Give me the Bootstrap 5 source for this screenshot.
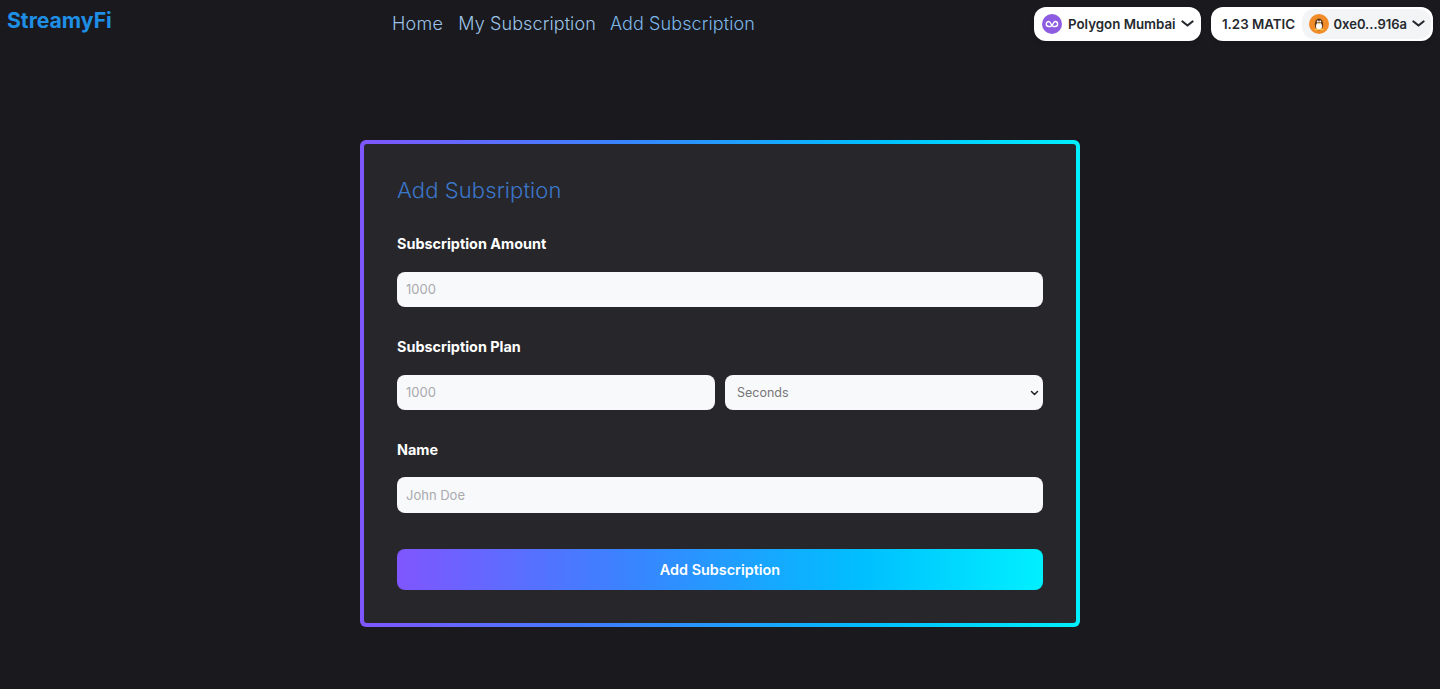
<!doctype html>
<html lang="en">
<head>
<meta charset="utf-8">
<title>StreamyFi</title>
<link rel="stylesheet" href="https://cdn.jsdelivr.net/npm/bootstrap@5.3.0/dist/css/bootstrap.min.css">
<style>
body{background:#19191e;font-family:Inter,"Open Sans",sans-serif;min-height:689px;overflow:hidden}
.top-bar{height:48px;padding:0 7px}
.brand-name{font-size:21.2px;font-weight:700;color:#1f8fe6;line-height:26px;padding-top:7px;width:385px;text-decoration:none}
.top-links{gap:14px;padding-top:12px}
.top-link{font-size:18px;font-weight:300;color:#9cc3e6;line-height:24px;text-decoration:none;letter-spacing:.1px}
.top-link:first-child{margin-right:1px;letter-spacing:.3px}
.top-link.is-blue{color:#7db6e8}
.wallet-area{gap:10px;padding-top:7px;margin-left:auto}
.wallet-btn{height:34px;background:#fff;border-radius:12px;font-size:13.3px;font-weight:600;color:#25292e;box-shadow:0 2px 4px rgba(0,0,0,.1);white-space:nowrap}
.wallet-btn span{padding-top:2px}
.chain-btn{width:167px;padding:0 7px 0 8px}
.chain-btn .chain-name{margin-left:6px}
.acct-btn{width:222px;padding:0 0 0 11px}
.acct-chip{height:30px;background:#f3f4f6;border-radius:12px;padding:0 6px 0 7px;margin-left:auto;margin-right:2px;gap:5px}
.addr-text{font-size:13px}
.chev{flex:none}
.form-frame{width:720px;margin:92px auto 0;height:487px;padding:4px;border-radius:6px;background:linear-gradient(90deg,#7f56ff,#3b82ff 35%,#00bfff 72%,#00f0ff)}
.form-inner{background:#27272b;height:100%;border-radius:3px;padding:32px 33px 33px}
.form-heading{font-size:22px;font-weight:300;color:#3b76c9;line-height:28px;margin:0 0 30px;letter-spacing:.1px}
.field-label{display:block;font-size:14.4px;font-weight:700;color:#fff;line-height:20px;margin-bottom:18px}
.field-block{margin-bottom:30px}
.field-block.is-last{margin-bottom:36px}
.field-block.is-last .field-label{margin-bottom:17px}
.field-ctl{height:35px;background-color:#f8f9fb;border:0;border-radius:8px;font-size:13px;padding:0 9px 2px;color:#777}
.field-ctl::placeholder{color:#a9a9ae;opacity:1}
.field-ctl.tall{height:36px;padding-bottom:0}
.form-select.field-ctl{padding:1px 20px 0 12px;color:#777;font-size:12.5px;background-image:url("data:image/svg+xml,%3csvg xmlns='http://www.w3.org/2000/svg' viewBox='0 0 16 16'%3e%3cpath fill='none' stroke='%23222' stroke-linecap='round' stroke-linejoin='round' stroke-width='3' d='m2 5 6 6 6-6'/%3e%3c/svg%3e");background-size:9px 8px;background-position:right 4px center}
.plan-row{gap:10px;grid-template-columns:1fr 1fr}
.submit-btn{height:41px;width:100%;border:0;border-radius:8px;background:linear-gradient(90deg,#7f56ff,#3b82ff 35%,#00bfff 72%,#00f0ff);color:#fff;font-size:14.4px;font-weight:600;display:block}
.submit-btn:hover{color:#fff}
</style>
</head>
<body>
<header class="top-bar d-flex align-items-start">
  <a class="brand-name" href="#">StreamyFi</a>
  <nav class="top-links d-flex">
    <a class="top-link" href="#">Home</a>
    <a class="top-link" href="#">My Subscription</a>
    <a class="top-link is-blue" href="#">Add Subscription</a>
  </nav>
  <div class="wallet-area d-flex">
    <div class="wallet-btn chain-btn d-flex align-items-center">
      <svg width="20" height="20" viewBox="0 0 20 20" aria-hidden="true"><circle cx="10" cy="10" r="10" fill="#8d5ce0"/><path d="M4.300 10a2.500 2.500 0 0 1 2.500-2.500c2 0 2.400 5 4.400 5h1.900a2.500 2.500 0 0 0 0-5c-2 0-2.400 5-4.400 5H6.800A2.500 2.500 0 0 1 4.300 10z" fill="none" stroke="#fff" stroke-width="1.400"/></svg>
      <span class="chain-name">Polygon Mumbai</span>
      <svg class="chev ms-auto" width="13" height="8" viewBox="0 0 13 8" aria-hidden="true"><path d="M1.500 1.500 6.500 5.500l5-4" fill="none" stroke="#25292e" stroke-width="2.200" stroke-linecap="round" stroke-linejoin="round"/></svg>
    </div>
    <div class="wallet-btn acct-btn d-flex align-items-center">
      <span>1.23 MATIC</span>
      <div class="acct-chip d-flex align-items-center">
        <svg width="20" height="20" viewBox="0 0 20 20" aria-hidden="true"><circle cx="10" cy="10" r="10" fill="#f28c28"/><ellipse cx="10" cy="10.500" rx="4.200" ry="6" fill="#5b3a1c"/><ellipse cx="10" cy="12.300" rx="3" ry="3.600" fill="#fff"/><circle cx="8.800" cy="7.600" r="1" fill="#fff"/><circle cx="11.200" cy="7.600" r="1" fill="#fff"/><path d="M8.600 9h2.800L10 10.400z" fill="#f6c04a"/><path d="M6 15.500h3M11 15.500h3" stroke="#f6c04a" stroke-width="1.500" stroke-linecap="round"/></svg>
        <span class="addr-text">0xe0...916a</span>
        <svg class="chev" width="13" height="8" viewBox="0 0 13 8" aria-hidden="true"><path d="M1.500 1.500 6.500 5.500l5-4" fill="none" stroke="#25292e" stroke-width="2.200" stroke-linecap="round" stroke-linejoin="round"/></svg>
      </div>
    </div>
  </div>
</header>
<main class="form-frame">
  <form class="form-inner">
    <h2 class="form-heading">Add Subsription</h2>
    <div class="field-block">
      <label class="field-label" for="amt">Subscription Amount</label>
      <input id="amt" class="form-control field-ctl" placeholder="1000">
    </div>
    <div class="field-block">
      <label class="field-label" for="plan">Subscription Plan</label>
      <div class="d-grid plan-row">
        <input id="plan" class="form-control field-ctl" placeholder="1000">
        <select class="form-select field-ctl" aria-label="Unit"><option>Seconds</option></select>
      </div>
    </div>
    <div class="field-block is-last">
      <label class="field-label" for="nm">Name</label>
      <input id="nm" class="form-control field-ctl tall" placeholder="John Doe">
    </div>
    <button type="button" class="btn submit-btn">Add Subscription</button>
  </form>
</main>
<script src="https://cdn.jsdelivr.net/npm/bootstrap@5.3.0/dist/js/bootstrap.bundle.min.js"></script>
</body>
</html>
